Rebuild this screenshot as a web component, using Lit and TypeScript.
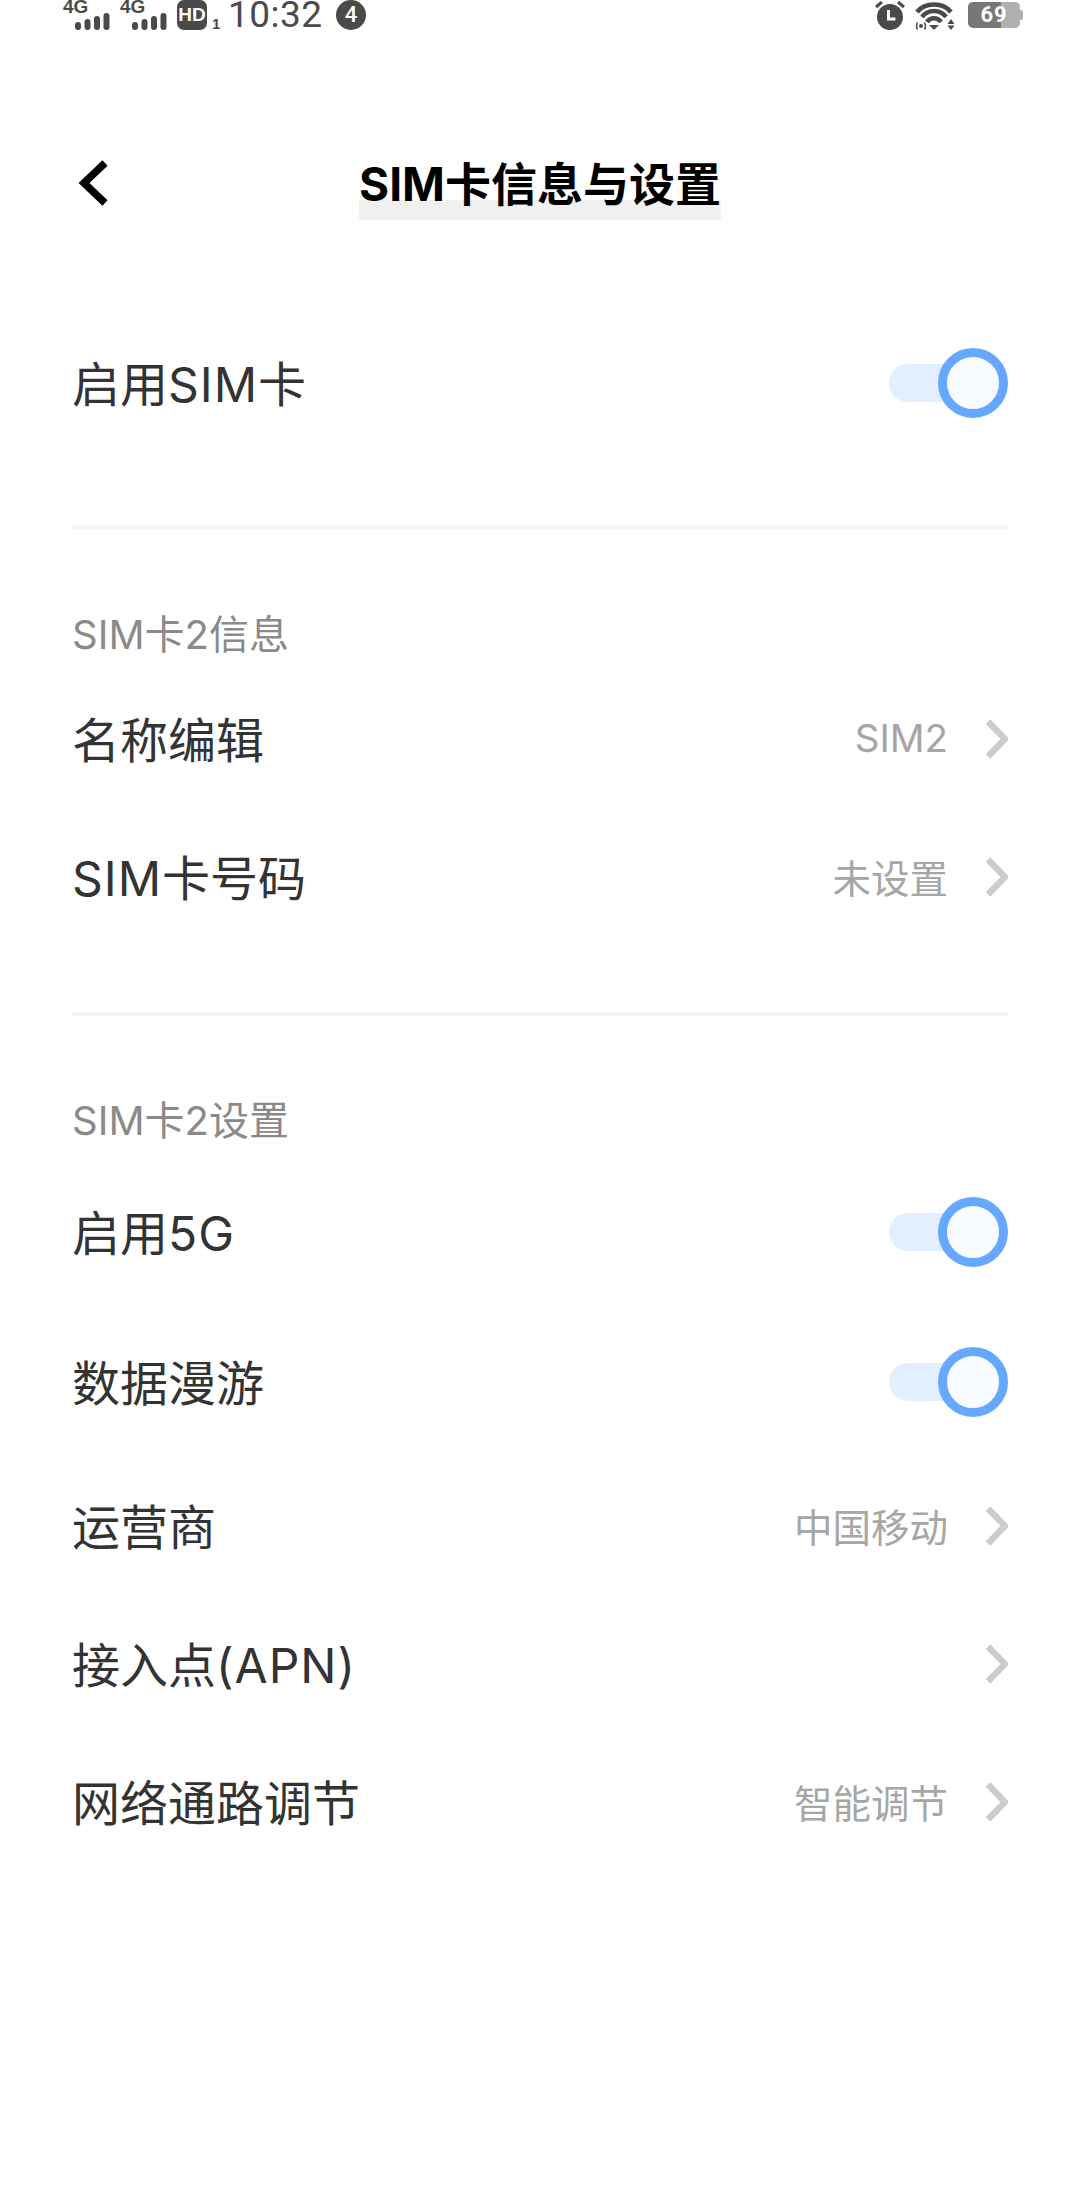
import { LitElement, html, css, svg } from 'lit';
import { customElement } from 'lit/decorators.js';

const signal = svg`<svg class="bars" width="35" height="17" viewBox="0 0 35 17" fill="#4a4a4a">
  <rect x="0" y="9" width="6" height="8" rx="3"/>
  <rect x="9.500" y="6" width="6" height="11" rx="3"/>
  <rect x="19" y="3" width="6" height="14" rx="3"/>
  <rect x="28.500" y="0" width="6" height="17" rx="3"/>
</svg>`;

const alarm = svg`<svg width="30" height="29" viewBox="0 0 30 29">
  <circle cx="15" cy="16" r="13" fill="#4a4a4a"/>
  <path d="M13.500 9v9h7" fill="none" stroke="#fff" stroke-width="3"/>
  <path d="M1 6l6-5M29 6l-6-5" stroke="#4a4a4a" stroke-width="3" fill="none"/>
</svg>`;

const wifi = svg`<svg class="wifi" width="42" height="29" viewBox="0 0 42 29" fill="none" stroke="#4a4a4a">
  <path d="M3 11C11 1 29 1 37 11" stroke-width="4.500"/>
  <path d="M8 16C14 8 26 8 32 16" stroke-width="4.500"/>
  <path d="M13 21C16 16 24 16 27 21" stroke-width="4.500"/>
  <path d="M15 24h10l-5 5z" fill="#4a4a4a" stroke="none"/>
  <circle cx="7" cy="25" r="2" fill="#4a4a4a" stroke="none"/>
  <path d="M3.500 21.500q-2 3.500 0 7M10.500 21.500q2 3.500 0 7" stroke-width="1.500"/>
  <path d="M33.500 23l3.500-5 3.500 5zM33.500 24.500h7l-3.500 4.500z" fill="#4a4a4a" stroke="none"/>
</svg>`;

const chevron = svg`<svg class="chev" width="23" height="40" viewBox="0 0 23 40" fill="none">
  <path d="M3 2.500L20 20L3 37.500" stroke="#cccccc" stroke-width="6.500"/>
</svg>`;

const back = svg`<svg width="32" height="46" viewBox="0 0 32 46" fill="none">
  <path d="M28 3L7 23L28 43" stroke="#000" stroke-width="7.500"/>
</svg>`;

@customElement('app-root')
export class AppRoot extends LitElement {
  static styles = css`
    :host {
      display: block;
      width: 1080px;
      height: 2200px;
      background: #fff;
      font-family: 'Inter', 'Noto Sans CJK SC', sans-serif;
      color: #333;
      overflow: hidden;
    }

    .status {
      height: 32px;
      padding: 0 60px 0 63px;
      display: flex;
      justify-content: space-between;
      color: #4a4a4a;
    }
    .status-left,
    .status-right {
      display: flex;
      align-items: flex-start;
    }
    .sim {
      width: 47px;
      height: 30px;
      margin-right: 10px;
      display: flex;
      flex-direction: column;
      align-items: flex-start;
    }
    .sim span {
      font: bold 19px/13px 'Liberation Sans', sans-serif;
      height: 13px;
    }
    .bars {
      margin-left: 12px;
    }
    .hd {
      width: 30px;
      height: 30px;
      border-radius: 7px;
      background: #4a4a4a;
      color: #fff;
      font: bold 19px/30px 'Liberation Sans', sans-serif;
      text-align: center;
    }
    .sub {
      font: bold 15px/13px 'Liberation Sans', sans-serif;
      margin: 17px 0 0 5px;
      width: 16px;
    }
    .time {
      font-family: 'Roboto', sans-serif;
      font-size: 37px;
      line-height: 30px;
      width: 108px;
      letter-spacing: 0.5px;
    }
    .num {
      width: 30px;
      height: 30px;
      border-radius: 50%;
      background: #4a4a4a;
      color: #fff;
      font-family: 'Roboto', sans-serif;
      font-size: 22px;
      font-weight: 500;
      line-height: 30px;
      text-align: center;
    }
    .status-right svg {
      margin-top: 1px;
      margin-right: 9px;
    }
    .status-right svg.wifi {
      margin-right: 12px;
    }
    .batt {
      position: relative;
      width: 52px;
      height: 26px;
      margin-top: 2px;
      border-radius: 5px;
      background: linear-gradient(90deg, #777 0 64%, #b0b0b0 64%);
      color: #fff;
      font-family: 'Roboto', sans-serif;
      font-size: 22px;
      font-weight: 700;
      line-height: 26px;
      text-align: center;
      letter-spacing: 1px;
    }
    .batt::after {
      content: '';
      position: absolute;
      right: -3px;
      top: 8px;
      width: 3px;
      height: 10px;
      border-radius: 0 2px 2px 0;
      background: #b0b0b0;
    }

    .page {
      padding: 0 72px;
    }
    .header {
      margin-top: 128px;
      display: grid;
      grid-template-columns: 1fr auto 1fr;
      align-items: start;
    }
    .back {
      margin-left: 5px;
      height: 46px;
    }
    .title {
      height: 60px;
      line-height: 48px;
      font-size: 46px;
      font-weight: 700;
      color: #000;
      background: linear-gradient(#f0f0f0, #f0f0f0) bottom / 100% 20px no-repeat;
    }

    .row {
      display: flex;
      align-items: center;
      font-size: 48px;
      color: #333;
    }
    .row.toggle-row {
      height: 150px;
    }
    .row.nav-row {
      height: 138px;
    }
    .label {
      flex: 1;
      padding-bottom: 5px;
    }
    .lat {
      letter-spacing: 1px;
    }
    .value {
      font-size: 38.500px;
      color: #a6a6a6;
      margin-right: 37px;
      padding-bottom: 3px;
    }
    .first {
      margin-top: 88px;
    }
    .divider {
      height: 4px;
      background: #f4f4f4;
    }
    .divider.one {
      margin-top: 67px;
    }
    .divider.two {
      margin-top: 66px;
    }
    .section {
      margin-top: 67px;
      height: 74px;
      line-height: 76px;
      font-size: 40px;
      color: #8a8a8a;
    }
    .section.info {
      margin-top: 68px;
      margin-bottom: -1px;
    }

    .toggle {
      position: relative;
      width: 119px;
      height: 38px;
      border-radius: 19px;
      background: #e2efff;
    }
    .toggle::after {
      content: '';
      position: absolute;
      box-sizing: border-box;
      left: 49px;
      top: -16px;
      width: 70px;
      height: 70px;
      border-radius: 50%;
      border: 9px solid #66a8ff;
      background: #f8fbff;
    }
  `;

  private toggleRow(label: unknown, first = false) {
    return html`<div class="row toggle-row ${first ? 'first' : ''}">
      <span class="label">${label}</span>
      <span class="toggle"></span>
    </div>`;
  }

  private navRow(label: unknown, value = '') {
    return html`<div class="row nav-row">
      <span class="label">${label}</span>
      <span class="value">${value}</span>
      ${chevron}
    </div>`;
  }

  render() {
    return html`
      <div class="status">
        <div class="status-left">
          <div class="sim"><span>4G</span>${signal}</div>
          <div class="sim"><span>4G</span>${signal}</div>
          <div class="hd">HD</div>
          <div class="sub">1</div>
          <div class="time">10:32</div>
          <div class="num">4</div>
        </div>
        <div class="status-right">
          ${alarm}${wifi}
          <div class="batt">69</div>
        </div>
      </div>
      <div class="page">
        <div class="header">
          <div class="back">${back}</div>
          <div class="title">SIM卡信息与设置</div>
          <div></div>
        </div>
        ${this.toggleRow(html`启用<span class="lat">SIM</span>卡`, true)}
        <div class="divider one"></div>
        <div class="section info">SIM卡2信息</div>
        ${this.navRow('名称编辑', 'SIM2')}
        ${this.navRow(html`<span class="lat">SIM</span>卡号码`, '未设置')}
        <div class="divider two"></div>
        <div class="section">SIM卡2设置</div>
        ${this.toggleRow(html`启用<span class="lat">5G</span>`)}
        ${this.toggleRow('数据漫游')}
        ${this.navRow('运营商', '中国移动')}
        ${this.navRow(html`接入点<span class="lat">(APN)</span>`)}
        ${this.navRow('网络通路调节', '智能调节')}
      </div>
    `;
  }
}
